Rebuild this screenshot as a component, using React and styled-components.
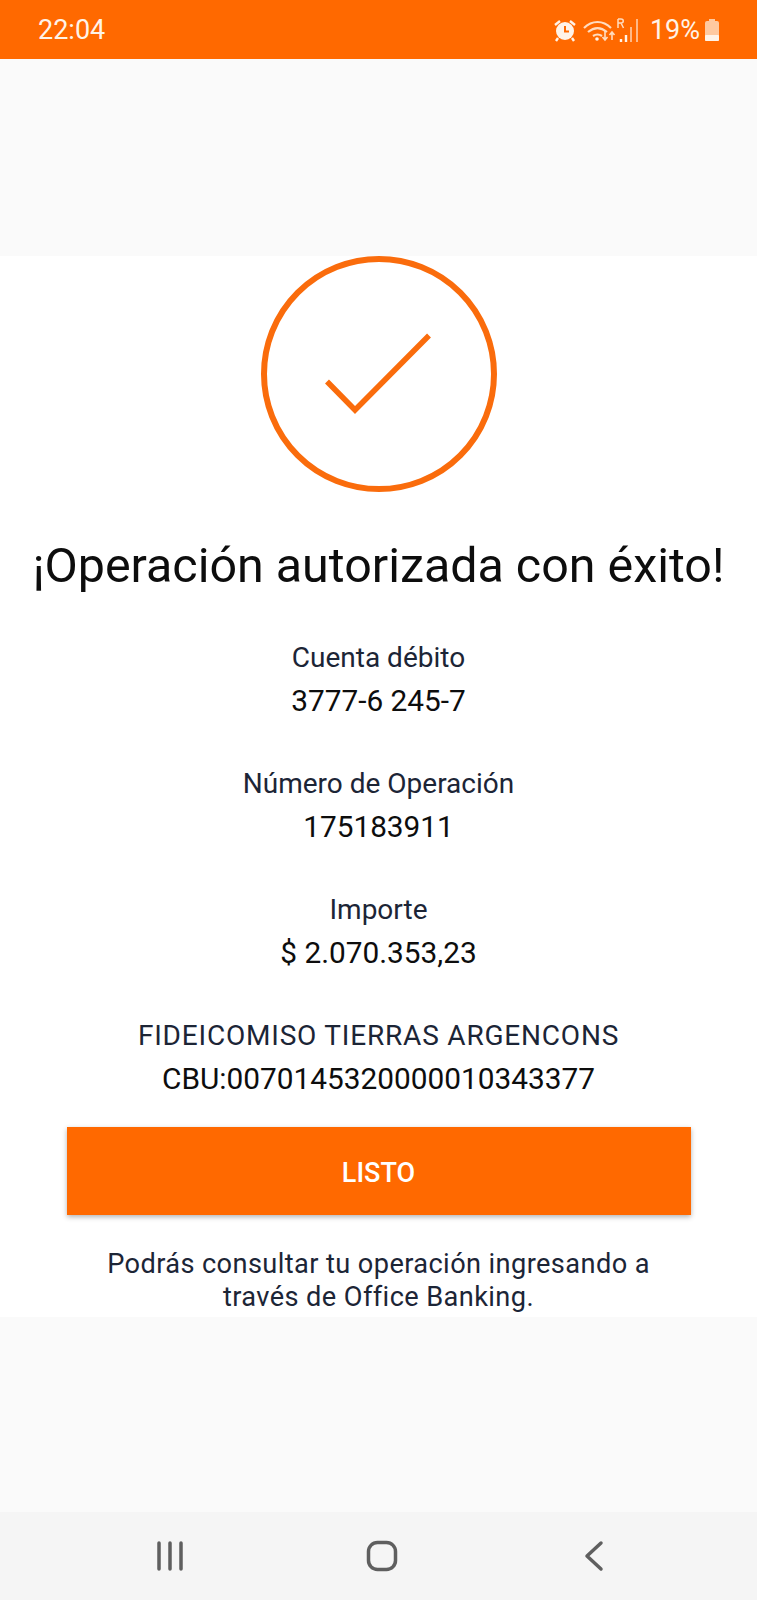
import React from 'react';
import styled, { createGlobalStyle } from 'styled-components';

const Global = createGlobalStyle`
  html, body { margin: 0; padding: 0; background: #fafafa; }
  * { box-sizing: border-box; }
`;
const Screen = styled.div`
  width: 757px; height: 1600px; display: flex; flex-direction: column;
  font-family: Roboto, "Liberation Sans", sans-serif; background: #fafafa; overflow: hidden;
`;
const StatusBar = styled.header`
  height: 59px; flex: none; background: #ff6900; color: #fff3e8;
  display: flex; align-items: center; justify-content: space-between;
  padding: 0 37px 0 38px; font-size: 27px;
`;
const StatusIcons = styled.div`
  display: flex; align-items: center; gap: 6px;
`;
const Battery = styled.span`
  font-size: 27px; margin-left: 5px; margin-right: -2px;
`;
const Spacer = styled.div`
  height: 197px; flex: none;
`;
const Card = styled.main`
  height: 1061px; flex: none; background: #fff; display: flex; flex-direction: column; align-items: center;
`;
const Title = styled.h1`
  margin: 46px 0 42px; font-size: 48.4px; line-height: 56px; font-weight: 400; color: #0d0d0d; white-space: nowrap;
`;
const Group = styled.section`
  text-align: center; margin-bottom: 40px;
  &:last-of-type { margin-bottom: 27px; }
`;
const Label = styled.div`
  font-size: 28px; line-height: 43px; color: #1c2536; letter-spacing: ${p => p.$wide ? '.8px' : '0'};
`;
const Value = styled.div`
  font-size: 29.800px; line-height: 43px; color: #0d0d0d;
`;
const Button = styled.button`
  width: 624px; height: 88px; flex: none; border: 0; padding: 3px 0 0; background: #ff6900; color: #fff; font: 500 27px Roboto, sans-serif;
  box-shadow: 0 2px 5px rgba(0,0,0,.3);
`;
const Note = styled.p`
  margin: 33px 0 0; width: 570px; text-align: center; font-size: 27.200px; line-height: 33px; letter-spacing: .4px; color: #1c2536;
`;
const NavBar = styled.nav`
  margin-top: auto; height: 88px; flex: none; background: #f5f5f5; display: grid; grid-template-columns: 340px 84px 1fr; align-items: center;
`;
const NavCell = styled.div`
  display: flex; justify-content: ${p => p.$justify || 'center'}; padding: ${p => p.$pad || '0'};
`;

export default function App() {
  return (
    <Screen>
      <Global />
      <StatusBar>
        <span>22:04</span>
        <StatusIcons>
          <svg width="24" height="24" viewBox="0 0 24 24" fill="none">
            <circle cx="12" cy="13" r="9" fill="#fff3e8" />
            <path d="M12 8v5.5h4" stroke="#ff6900" strokeWidth="2" />
            <path d="M2 7l5-4M22 7l-5-4M5 20l-2 3M19 20l2 3" stroke="#fff3e8" strokeWidth="2.4" />
          </svg>
          <svg width="56" height="26" viewBox="0 0 56 26" fill="none" stroke="#ffdcc0">
            <path d="M1 11c8-8 19-8 27 0M5 15c6-5 13-5 19 0M10 19c3-2 6-2 9 0" strokeWidth="2.2" />
            <circle cx="14" cy="22" r="1.8" fill="#fff3e8" stroke="none" />
            <path d="M22 14v9M19.5 20l2.5 3 2.5-3M29 23v-8M26.5 18l2.500-3 2.500 3" strokeWidth="1.6" />
            <path d="M38 25v-3M43 25v-7" stroke="#fff3e8" strokeWidth="2.400" />
            <path d="M48 25V10M54 25V2" strokeWidth="2" opacity=".7" />
            <path d="M35 2v9M35 2h3c3 0 3 4 0 4h-3M38 6l2.500 5" strokeWidth="1.500" />
          </svg>
          <Battery>19%</Battery>
          <svg width="16" height="24" viewBox="0 0 16 24">
            <rect x="5" y="1" width="6" height="3" fill="#ffc9a0" />
            <rect x="1" y="3" width="14" height="20" rx="2" fill="#ffc9a0" />
            <rect x="1" y="17" width="14" height="6" rx="1" fill="#fff3e8" />
          </svg>
        </StatusIcons>
      </StatusBar>
      <Spacer />
      <Card>
        <svg width="236" height="236" viewBox="0 0 236 236" fill="none" stroke="#fa6c0c" strokeWidth="6">
          <circle cx="118" cy="118" r="115" />
          <path d="M66 125.500L94 154L168 79.500" strokeWidth="5.500" />
        </svg>
        <Title>¡Operación autorizada con éxito!</Title>
        <Group><Label>Cuenta débito</Label><Value>3777-6 245-7</Value></Group>
        <Group><Label>Número de Operación</Label><Value>175183911</Value></Group>
        <Group><Label>Importe</Label><Value>$ 2.070.353,23</Value></Group>
        <Group><Label $wide>FIDEICOMISO TIERRAS ARGENCONS</Label><Value>CBU:0070145320000010343377</Value></Group>
        <Button>LISTO</Button>
        <Note>Podrás consultar tu operación ingresando a través de Office Banking.</Note>
      </Card>
      <NavBar>
        <NavCell>
          <svg width="30" height="30" viewBox="0 0 30 30" stroke="#5f5f5f" strokeWidth="3.500" strokeLinecap="round">
            <path d="M4 2v26M15 2v26M26 2v26" />
          </svg>
        </NavCell>
        <NavCell>
          <svg width="32" height="32" viewBox="0 0 32 32" fill="none" stroke="#5f5f5f" strokeWidth="3.500">
            <rect x="2.500" y="2.500" width="27" height="27" rx="9" />
          </svg>
        </NavCell>
        <NavCell $pad="0 0 0 160px" $justify="flex-start">
          <svg width="20" height="32" viewBox="0 0 20 32" fill="none" stroke="#5f5f5f" strokeWidth="3.500" strokeLinecap="round" strokeLinejoin="round">
            <path d="M17 3L3 16l14 13" />
          </svg>
        </NavCell>
      </NavBar>
    </Screen>
  );
}
